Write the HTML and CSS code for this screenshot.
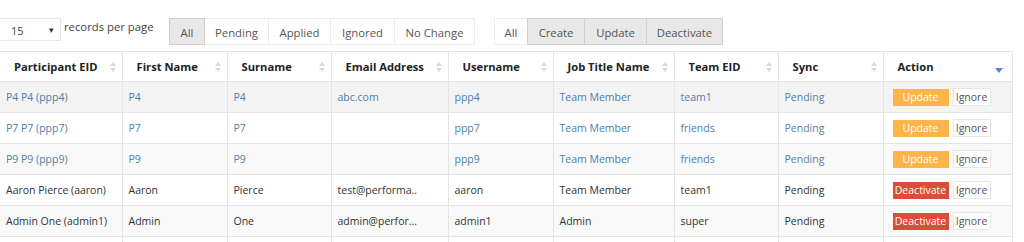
FILE: index.html
```html
<!DOCTYPE html>
<html lang="en">
<head>
<meta charset="UTF-8">
<title>Participant Sync</title>
<link rel="stylesheet" href="styles.css">
</head>
<body>
<div class="toolbar">
    <div class="per-page">
        <div class="select">15<span class="caret">&#9662;</span></div>
        <span class="per-label">records per page</span>
    </div>
    <div class="btn-group first">
        <span class="btn active">All</span>
        <span class="btn">Pending</span>
        <span class="btn">Applied</span>
        <span class="btn">Ignored</span>
        <span class="btn">No Change</span>
    </div>
    <div class="btn-group second">
        <span class="btn">All</span>
        <span class="btn active">Create</span>
        <span class="btn active">Update</span>
        <span class="btn active">Deactivate</span>
    </div>
</div>

<table class="grid">
    <colgroup>
        <col style="width:122px"><col style="width:105px"><col style="width:104px">
        <col style="width:117px"><col style="width:105px"><col style="width:121px">
        <col style="width:104px"><col style="width:105px"><col style="width:129px">
    </colgroup>
    <thead>
        <tr>
            <th><div class="th-inner">Participant EID<span class="sort"></span></div></th>
            <th><div class="th-inner">First Name<span class="sort"></span></div></th>
            <th><div class="th-inner">Surname<span class="sort"></span></div></th>
            <th><div class="th-inner">Email Address<span class="sort"></span></div></th>
            <th><div class="th-inner">Username<span class="sort"></span></div></th>
            <th><div class="th-inner">Job Title Name<span class="sort"></span></div></th>
            <th><div class="th-inner">Team EID<span class="sort"></span></div></th>
            <th><div class="th-inner">Sync<span class="sort"></span></div></th>
            <th><div class="th-inner">Action<span class="sort-desc"></span></div></th>
        </tr>
    </thead>
    <tbody>
        <tr class="changed hover">
            <td>P4 P4 (ppp4)</td><td>P4</td><td>P4</td><td>abc.com</td><td>ppp4</td>
            <td>Team Member</td><td>team1</td><td class="sync">Pending</td>
            <td class="action"><span class="act update">Update</span><span class="act ignore">Ignore</span></td>
        </tr>
        <tr class="changed">
            <td>P7 P7 (ppp7)</td><td>P7</td><td>P7</td><td></td><td>ppp7</td>
            <td>Team Member</td><td>friends</td><td class="sync">Pending</td>
            <td class="action"><span class="act update">Update</span><span class="act ignore">Ignore</span></td>
        </tr>
        <tr class="changed">
            <td>P9 P9 (ppp9)</td><td>P9</td><td>P9</td><td></td><td>ppp9</td>
            <td>Team Member</td><td>friends</td><td class="sync">Pending</td>
            <td class="action"><span class="act update">Update</span><span class="act ignore">Ignore</span></td>
        </tr>
        <tr>
            <td>Aaron Pierce (aaron)</td><td>Aaron</td><td>Pierce</td><td>test@performa..</td><td>aaron</td>
            <td>Team Member</td><td>team1</td><td>Pending</td>
            <td class="action"><span class="act deactivate">Deactivate</span><span class="act ignore">Ignore</span></td>
        </tr>
        <tr>
            <td>Admin One (admin1)</td><td>Admin</td><td>One</td><td>admin@perfor...</td><td>admin1</td>
            <td>Admin</td><td>super</td><td>Pending</td>
            <td class="action"><span class="act deactivate">Deactivate</span><span class="act ignore">Ignore</span></td>
        </tr>
        <tr>
            <td></td><td></td><td></td><td></td><td></td>
            <td></td><td></td><td></td><td></td>
        </tr>
    </tbody>
</table>
</body>
</html>
```

FILE: styles.css
```css
body {
    margin: 0;
    padding: 0;
    font-family: "Open Sans", "Liberation Sans", sans-serif;
    color: #333;
    background-color: #fff;
    overflow: hidden;
}
.toolbar {
    display: flex;
    align-items: flex-start;
    padding-top: 18px;
    height: 33px;
    box-sizing: border-box;
}
.per-page {
    display: flex;
    align-items: flex-start;
    width: 170px;
}
.select {
    position: relative;
    width: 49px;
    height: 21px;
    padding-left: 11px;
    border: 1px solid #e6e6e6;
    border-left: none;
    font-size: 11px;
    line-height: 23px;
    color: #444;
}
.caret {
    position: absolute;
    right: 6px;
    top: -1px;
    font-size: 9px;
    color: #333;
}
.per-label {
    margin-left: 3px;
    margin-top: 1px;
    font-size: 11.3px;
    color: #444;
}
.btn-group {
    display: flex;
    height: 27px;
}
.btn-group.second {
    margin-left: 20px;
}
.btn {
    display: flex;
    align-items: center;
    justify-content: center;
    padding: 2px 10px 0;
    box-sizing: border-box;
    height: 27px;
    border: 1px solid #ececec;
    margin-left: -1px;
    font-size: 11.3px;
    color: #555;
    background-color: #fff;
}
.btn.active {
    background-color: #e8e8e8;
    border-color: #cfcfcf;
    position: relative;
}
.first .btn:nth-child(1) { width: 36px; }
.first .btn:nth-child(2) { width: 65px; }
.first .btn:nth-child(3) { width: 63px; }
.first .btn:nth-child(4) { width: 65px; }
.first .btn:nth-child(5) { width: 81px; }
.second .btn:nth-child(1) { width: 34px; }
.second .btn:nth-child(2) { width: 58px; }
.second .btn:nth-child(3) { width: 63px; }
.second .btn:nth-child(4) { width: 77px; }

.grid {
    border-collapse: collapse;
    table-layout: fixed;
    width: 1012px;
    margin-top: 18px;
    font-size: 10.5px;
}
.grid th,
.grid td {
    border: 1px solid #e4e4e4;
    white-space: nowrap;
    overflow: hidden;
}
.grid tr > :first-child {
    border-left: none;
}
.grid th {
    height: 29px;
    padding: 0 6px 0 14px;
    text-align: left;
    font-size: 11.2px;
    font-weight: 700;
    color: #222;
}
.th-inner {
    display: flex;
    align-items: center;
    justify-content: space-between;
}
.sort {
    display: flex;
    flex-direction: column;
    gap: 2px;
    margin-top: 1px;
}
.sort::before,
.sort::after {
    content: "";
    width: 0;
    height: 0;
    border-left: 3px solid transparent;
    border-right: 3px solid transparent;
}
.sort::before {
    border-bottom: 4px solid #dadada;
}
.sort::after {
    border-top: 4px solid #dadada;
}
.sort-desc {
    width: 0;
    height: 0;
    margin-top: 8px;
    margin-right: 3px;
    border-left: 4px solid transparent;
    border-right: 4px solid transparent;
    border-top: 5px solid #5b8ac0;
}
.grid td {
    height: 30px;
    padding: 0 6px;
    color: #333;
}
.grid tbody tr:nth-child(odd) {
    background-color: #f9f9f9;
}
.grid tbody tr.hover {
    background-color: #f3f3f3;
}
.grid tr.changed td {
    color: #4a7fae;
}
.grid tr.changed td.sync {
    color: #5b7f9e;
}
.grid td.action {
    padding-left: 9px;
    font-size: 0;
}
.act {
    display: inline-block;
    vertical-align: middle;
    height: 17px;
    line-height: 17px;
    text-align: center;
    font-size: 10.5px;
    box-sizing: border-box;
}
.update {
    width: 56px;
    background-color: #fdb44b;
    color: #fff;
}
.deactivate {
    width: 56px;
    background-color: #dd4b39;
    color: #fff;
}
.ignore {
    width: 38px;
    height: 18px;
    margin-left: 4px;
    border: 1px solid #e6e6e6;
    background-color: #fff;
    color: #555;
    line-height: 16px;
}
.grid tr.changed td .ignore {
    color: #555;
}
```
